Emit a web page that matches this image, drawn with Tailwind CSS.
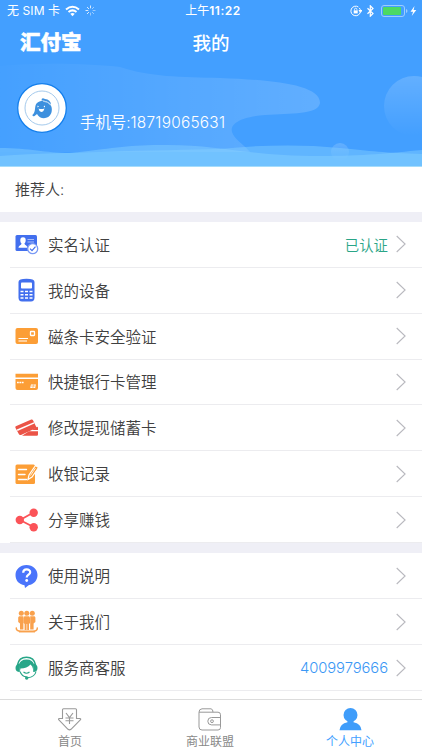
<!DOCTYPE html>
<html lang="zh-CN">
<head>
    <meta charset="UTF-8">
    <meta name="viewport" content="width=device-width, initial-scale=1.0">
    <title>我的</title>
    <script src="https://cdn.jsdelivr.net/npm/@tailwindcss/browser@4"></script>
    <style>
        body {
            font-family: Inter, 'Noto Sans CJK SC', sans-serif;
        }
        .logo {
            -webkit-text-stroke: 0.5px #fff;
        }
    </style>
</head>
<body class="bg-white">
    <svg class="hidden">
        <symbol id="arrow" viewBox="0 0 10 18">
            <path d="M.7 1l8.400 8L.7 17" fill="none" stroke="#b9b9bf" stroke-width="1.100"/>
        </symbol>
    </svg>
    <div class="relative w-[422px] h-[750px] overflow-hidden flex flex-col text-[#404040] font-[350]">
        <header class="relative h-[167px] shrink-0 bg-[#439fff] text-white">
            <svg class="absolute inset-0" width="422" height="167" viewBox="0 0 422 167">
                <defs>
                    <linearGradient id="cloud" x1="0" y1="0" x2="1" y2="0">
                        <stop offset="0" stop-color="#fff" stop-opacity=".01"/>
                        <stop offset="1" stop-color="#fff" stop-opacity=".16"/>
                    </linearGradient>
                    <linearGradient id="moon" x1="0" y1="0" x2="0" y2="1">
                        <stop offset="0" stop-color="#fff" stop-opacity=".17"/>
                        <stop offset="1" stop-color="#fff" stop-opacity="0"/>
                    </linearGradient>
                </defs>
                <path d="M0 66C40 62 95 64 120 67C150 77 180 77 220 78C270 80 320 84 320 103C318 115 290 113 265 115C238 117 230 125 232 132C234 139 242 143 250 152H0Z" fill="url(#cloud)"/>
                <circle cx="414" cy="106" r="30" fill="url(#moon)"/>
                <circle cx="340" cy="152" r="9" fill="url(#moon)"/>
                <path d="M0 148C30 148 45 153 70 153C110 149 125 145 160 145C220 144 245 156 320 156C365 156 390 153 422 150V167H0Z" fill="#8ad4ff" fill-opacity=".42"/>
                <path d="M0 156C40 153 70 153 100 152C150 150 190 150 220 149C260 145 300 144 340 148C370 151 385 153 422 154V167H0Z" fill="#8ad4ff" fill-opacity=".42"/>
                <path d="M0 166.500H422" stroke="#a5dcfb"/>
            </svg>
            <div class="relative flex h-[21px] items-center justify-between pl-[7px] pr-1 text-xs font-normal">
                <div class="flex items-center">
                    <span class="w-[53px] whitespace-nowrap tracking-[0.1px]">无 SIM 卡</span>
                    <svg class="ml-[5px]" width="15" height="12" viewBox="0 0 15 12" fill="none" stroke="#fff" stroke-width="2">
                        <path d="M1 4.500Q7.500-1 14 4.500M3.500 7Q7.500 3.700 11.500 7"/>
                        <path d="M5.300 8.800Q7.500 7 9.700 8.800L7.500 11.200Z" fill="#fff" stroke="none"/>
                    </svg>
                    <svg class="ml-[5px]" width="11" height="11" viewBox="0 0 11 11" stroke="#fff" stroke-width="1">
                        <path d="M5.500.5v2.800M2 2l2 2M.5 5.500h2.800M2 9l2-2" opacity=".8"/>
                        <path d="M5.500 7.700v2.800M7 7l2 2M7.700 5.500h2.800M7 4l2-2" opacity=".45"/>
                    </svg>
                </div>
                <div class="absolute left-0 w-[426px] text-center font-semibold tracking-[0.500px]"><span class="font-normal tracking-normal">上午</span>11:22</div>
                <div class="flex items-center">
                    <svg width="12" height="12" viewBox="0 0 12 12" fill="none" stroke="#fff">
                        <path d="M10.500 6A4.800 4.800 0 1 1 8.400 2M9.300 3a4.800 4.800 0 0 1 1.300 3M9 5.500h3l-1.500 1.800z"/>
                        <path d="M3.700 5.400h4v3h-4z" fill="#fff" stroke="none"/>
                        <path d="M4.500 5.500V4.400a1.200 1.200 0 0 1 2.400 0v1.100" stroke-width=".8"/>
                    </svg>
                    <svg class="ml-1" width="9" height="12" viewBox="0 0 9 12" fill="none" stroke="#fff" stroke-width="1.200">
                        <path d="M1.500 3.300l5.500 5.200-2.700 2.700V.8L7 3.500 1.500 8.700"/>
                    </svg>
                    <svg class="ml-1.5" width="37" height="12" viewBox="0 0 37 12">
                        <rect x=".5" y=".5" width="23" height="11" rx="2.500" fill="none" stroke="#9ccdff"/>
                        <rect x="2" y="2" width="18" height="8" rx="1" fill="#4cd964"/>
                        <path d="M25 4v4q1.500-.5 1.500-2T25 4" fill="#9ccdff"/>
                        <path d="M33.500 1L29.500 6.700h2.600L30.700 11l4.600-6h-2.700z" fill="#fff"/>
                    </svg>
                </div>
            </div>
            <div class="relative h-11">
                <div class="logo absolute left-5 top-[7px] text-[20.500px] leading-[30px] font-black">汇付宝</div>
                <h1 class="text-center text-[18.500px] leading-[45px] font-medium">我的</h1>
            </div>
            <div class="relative flex pl-[17px] pt-[18px]">
                <svg width="50" height="50" viewBox="0 0 50 50">
                    <circle cx="25" cy="25" r="24.300" fill="#fff" stroke="#147fec" stroke-width="1.300"/>
                    <circle cx="25" cy="25" r="17" fill="none" stroke="#8dbbe6" stroke-width=".8"/>
                    <path d="M15.300 32C18 30 17.800 27 18.300 23.500C19.500 18 24.500 17.500 29 18.500C34 20 36 25 34.300 30C32 36.500 23 37 20 31L17.500 33Q16 34 15.300 32Z" fill="#3d90de"/>
                    <path d="M24.500 17.500Q24.500 14 28 16Q33.500 16.500 34 21.500Q30.500 17.500 24.500 17.500Z" fill="#3d90de"/>
                    <path d="M26 18.200Q31 18.500 33.500 22" stroke="#fff" stroke-width=".6" fill="none"/>
                    <path d="M21.500 25.500Q24 26.500 27.500 25.500Q26.500 29 24.200 29Q22 28.500 21.500 25.500ZM20.500 22.500l1.500 1-1.500 1ZM28 22.500l-1.500 1 1.500 1Z" fill="#fff"/>
                </svg>
                <div class="pl-[13px] pt-[28px] text-[15.400px] leading-6 whitespace-nowrap">手机号:<span class="tracking-[0.250px]">18719065631</span></div>
            </div>
        </header>

        <div class="h-[45px] shrink-0 pl-[15px] text-[15px] leading-[46px]">推荐人:</div>
        <div class="h-[10px] shrink-0 bg-[#efeff6]"></div>

        <ul class="h-[321px] shrink-0 flex flex-col text-[15.500px]">
            <li class="flex-1 ml-2.5 pl-[5px] pr-4 flex items-center border-b border-[#ececef]">
                <svg width="24" height="24" viewBox="0 0 24 24">
                    <rect x=".5" y="3" width="21.500" height="16" rx="1.500" fill="#426fee"/>
                    <path d="M8 5.300c2 0 2.800 1.300 2.700 3 0 1.500-.5 2.600-1.300 3.200.2 1.800 2.800 1.500 3.100 4.200h-9c.3-2.700 2.900-2.400 3.100-4.200-.9-.6-1.300-1.700-1.300-3.200 0-1.700.8-3 2.700-3z" fill="#fff"/>
                    <path d="M12.500 7.500H19M12.500 10H19" stroke="#a9bdf8" stroke-width="1.200"/>
                    <circle cx="17.700" cy="16.700" r="5" fill="#fff" stroke="#7a9af5" stroke-width="1.300"/>
                    <path d="M15 16.600l2 2 3.500-4" fill="none" stroke="#426fee" stroke-width="1.200"/>
                </svg>
                <span class="ml-[9px] pt-0.5 flex-1">实名认证</span>
                <span class="mr-2 pt-0.5 text-[14.400px] text-[#2aa587]">已认证</span>
                <svg width="10" height="18"><use href="#arrow"/></svg>
            </li>
            <li class="flex-1 ml-2.5 pl-[5px] pr-4 flex items-center border-b border-[#ececef]">
                <svg width="24" height="24" viewBox="0 0 24 24">
                    <path d="M3.500 4Q3.500.8 11.500.8T19.500 4V19.500Q19.500 23.500 16 23.500H7Q3.500 23.500 3.500 19.500Z" fill="#426fee"/>
                    <rect x="6" y="4.500" width="11" height="6" rx=".8" fill="#fff"/>
                    <path d="M5.500 13.500h3M10 13.500h3M14.500 13.500h3M5.500 16.800h3M10 16.800h3M14.500 16.800h3M5.500 20h3M10 20h3M14.500 20h3" stroke="#fff" stroke-width="1.600"/>
                </svg>
                <span class="ml-[9px] pt-0.5 flex-1">我的设备</span>
                <svg width="10" height="18"><use href="#arrow"/></svg>
            </li>
            <li class="flex-1 ml-2.5 pl-[5px] pr-4 flex items-center border-b border-[#ececef]">
                <svg width="24" height="24" viewBox="0 0 24 24">
                    <rect x=".5" y="4" width="22.500" height="16" rx="2" fill="#fc9e36"/>
                    <rect x="15.500" y="7.500" width="4" height="4" rx=".5" fill="none" stroke="#fff" stroke-width="1.300"/>
                    <path d="M3.500 14.500H13M3.500 17H12" stroke="#fff" stroke-width="1.200"/>
                </svg>
                <span class="ml-[9px] pt-0.5 flex-1">磁条卡安全验证</span>
                <svg width="10" height="18"><use href="#arrow"/></svg>
            </li>
            <li class="flex-1 ml-2.5 pl-[5px] pr-4 flex items-center border-b border-[#ececef]">
                <svg width="24" height="24" viewBox="0 0 24 24">
                    <path d="M.5 3.800h22.500v3.700H.5zM.5 9h22.500V18q0 2-2 2H2.500q-2 0-2-2z" fill="#fc9e36"/>
                    <path d="M2 12.500h7" stroke="#fff" stroke-width="1.400" stroke-dasharray="1.800 .6"/>
                    <path d="M16 14.500h5l-.8 3.500h-5z" fill="#fff"/>
                    <path d="M16 16h4.500M18.500 14.500l-.6 3.500" stroke="#fc9e36" stroke-width=".6"/>
                </svg>
                <span class="ml-[9px] pt-0.5 flex-1">快捷银行卡管理</span>
                <svg width="10" height="18"><use href="#arrow"/></svg>
            </li>
            <li class="flex-1 ml-2.5 pl-[5px] pr-4 flex items-center border-b border-[#ececef]">
                <svg width="24" height="24" viewBox="0 0 24 24" fill="#eb5447">
                    <path d="M.8 10.300L16.300 3.600q1.200-.4 1.700.6L21.300 10.900q.3.900-.6 1.300L6 18.900q-1.500.6-2.200-.8L.4 11.700q-.3-1 .4-1.400z"/>
                    <path d="M1.800 13.600L18.800 6.200l.6 1.200L2.500 14.900z" fill="#fff"/>
                    <path d="M22 10.700q1 .1 1 1V14h-6zM14 15.300H23v3.200q0 1.200-1.200 1.200H7z"/>
                </svg>
                <span class="ml-[9px] pt-0.5 flex-1">修改提现储蓄卡</span>
                <svg width="10" height="18"><use href="#arrow"/></svg>
            </li>
            <li class="flex-1 ml-2.5 pl-[5px] pr-4 flex items-center border-b border-[#ececef]">
                <svg width="24" height="24" viewBox="0 0 24 24">
                    <rect x=".5" y="2.500" width="19.500" height="19.500" rx="1.500" fill="#fc9e36"/>
                    <path d="M3.500 7.500h8M3.500 12.500h6.500M3.500 17.500h8" stroke="#fff" stroke-width="1.400" stroke-linecap="round"/>
                    <path d="M13 17.500l1-4.500L20.500 3.500l3 2L17 15z" fill="#fc9e36" stroke="#fff" stroke-width="1.200"/>
                    <path d="M15.500 13.500l5-7.500" stroke="#fff" stroke-width=".8"/>
                </svg>
                <span class="ml-[9px] pt-0.5 flex-1">收银记录</span>
                <svg width="10" height="18"><use href="#arrow"/></svg>
            </li>
            <li class="flex-1 ml-2.5 pl-[5px] pr-4 flex items-center border-b border-[#ececef]">
                <svg width="24" height="24" viewBox="0 0 24 24" fill="#fb5358">
                    <path d="M18.500 4.500L5 12l13.500 7" fill="none" stroke="#fb5358" stroke-width="1.800"/>
                    <circle cx="4.800" cy="12" r="4.200"/>
                    <circle cx="18.700" cy="4.800" r="4.200"/>
                    <circle cx="18.700" cy="19.200" r="4.200"/>
                </svg>
                <span class="ml-[9px] pt-0.5 flex-1">分享赚钱</span>
                <svg width="10" height="18"><use href="#arrow"/></svg>
            </li>
        </ul>
        <div class="h-[10px] shrink-0 bg-[#efeff6]"></div>

        <ul class="h-[138px] shrink-0 flex flex-col text-[15.500px]">
            <li class="flex-1 ml-2.5 pl-[5px] pr-4 flex items-center border-b border-[#ececef]">
                <svg width="24" height="24" viewBox="0 0 24 24">
                    <path d="M11.500 1C18 1 22.500 5.500 22.500 11S18.500 20.500 14 21L10 24 9.500 21.200C4 20.500.5 16.500.5 11S5 1 11.500 1Z" fill="#4a74fb"/>
                    <path d="M8.200 8.700c0-4.300 7-4.300 7-.5 0 2.500-3.500 2.500-3.500 5.300" fill="none" stroke="#fff" stroke-width="2.200"/>
                    <circle cx="11.700" cy="16.500" r="1.400" fill="#fff"/>
                </svg>
                <span class="ml-[9px] pt-0.5 flex-1">使用说明</span>
                <svg width="10" height="18"><use href="#arrow"/></svg>
            </li>
            <li class="flex-1 ml-2.5 pl-[5px] pr-4 flex items-center border-b border-[#ececef]">
                <svg width="24" height="24" viewBox="0 0 24 24" fill="#f9a14d">
                    <circle cx="6.300" cy="3.300" r="2.500"/>
                    <circle cx="11.800" cy="3.300" r="2.500"/>
                    <circle cx="17.300" cy="3.300" r="2.500"/>
                    <path d="M4 6.200h4.400v13.300H5V13.500L3.200 12V7.500zM9.400 6.200h4.800l.8 1.500V13l-1 1v6H9.600v-6l-1-1V7.700zM15.200 6.200h4.400l.8 1.300V12l-1.800 1.500v6h-3.400z"/>
                    <path d="M1.300 18Q1 21 6 21.200H18Q22.500 21 22.300 18" fill="none" stroke="#f9a14d" stroke-width="1.500" stroke-linecap="round"/>
                    <path d="M4 21.700h16" stroke="#f9a14d" stroke-width="1.500"/>
                    <path d="M11.800 14v6" stroke="#fff" stroke-width=".6"/>
                </svg>
                <span class="ml-[9px] pt-0.5 flex-1">关于我们</span>
                <svg width="10" height="18"><use href="#arrow"/></svg>
            </li>
            <li class="flex-1 ml-2.5 pl-[5px] pr-4 flex items-center border-b border-[#ececef]">
                <svg width="24" height="24" viewBox="0 0 24 24" fill="#27a688">
                    <path d="M2.500 9C3.500 3.500 7 1.300 11.500 1.300S19.500 3.500 20.500 9" fill="none" stroke="#27a688" stroke-width="1.500"/>
                    <path d="M4 9Q5 3.500 11.500 3.500T19 9L18 13Q17.700 10 15.500 8.500Q12 12.500 5.500 12.500L5 15Z"/>
                    <path d="M4.800 7.500v8.500Q.5 16 .5 12T4.800 7.500ZM18.200 7.500v8.500Q22.500 16 22.500 12T18.200 7.500Z"/>
                    <path d="M5 15.500Q7 20.800 11.500 20.800M21 15.500Q20 20.800 12.500 21.800M8.500 16Q11.500 18.500 14.500 16" fill="none" stroke="#27a688" stroke-width="1.100"/>
                    <circle cx="11.700" cy="22" r="1.700"/>
                </svg>
                <span class="ml-[9px] pt-0.5 flex-1">服务商客服</span>
                <span class="mr-2 pt-px text-[14.800px] tracking-[-0.080px] text-[#3b98f5]">4009979666</span>
                <svg width="10" height="18"><use href="#arrow"/></svg>
            </li>
        </ul>

        <nav class="mt-auto h-[51px] shrink-0 grid grid-cols-3 border-t border-[#dcdcdc] pr-[2px] text-xs font-normal text-[#888]">
            <div class="flex flex-col items-center pt-2">
                <svg width="24" height="24" viewBox="0 0 24 24" fill="none" stroke="#999" stroke-width="1.100">
                    <path d="M5.500.8h12q1 0 1 1v8.700h3.300q1.500.3.500 1.500L13 21.300q-1.500 1.200-3 0L.9 12q-1-1.200.5-1.500h3.100V1.800q0-1 1-1Z"/>
                    <path d="M8 5l3.500 4.500L15 5M7.500 10h8M7.500 12.800h8M11.500 9.500v6.500"/>
                </svg>
                <span class="leading-5">首页</span>
            </div>
            <div class="flex flex-col items-center pt-2">
                <svg width="24" height="24" viewBox="0 0 24 24" fill="none" stroke="#999">
                    <path d="M1 4.200V19q0 3 3 3h16q2.500 0 2.500-2.500V6.700q0-2.500-2.500-2.500H1Q1 1 4 .8h9q2 .3 2 3.400M22.500 9.500h-9a3.700 3.700 0 0 0 0 7.400h9"/>
                    <circle cx="14" cy="13.200" r="1.400"/>
                </svg>
                <span class="leading-5">商业联盟</span>
            </div>
            <div class="flex flex-col items-center pt-2">
                <svg width="24" height="24" viewBox="0 0 24 24" fill="#3f9dfa">
                    <circle cx="12.500" cy="7" r="7"/>
                    <path d="M9.500 12h6v2.200q7.500 1.500 8 8H1.500q.5-6.500 8-8z"/>
                </svg>
                <span class="leading-5 text-[#439fff]">个人中心</span>
            </div>
        </nav>
    </div>
</body>
</html>
